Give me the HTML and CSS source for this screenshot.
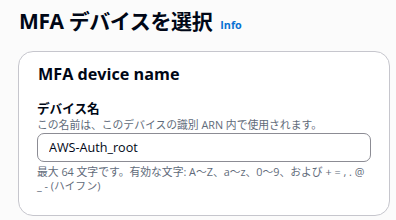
FILE: index.html
```html
<!DOCTYPE html>
<html>
	<head>
		<meta charset="UTF-8">
		<title>MFA デバイスを選択</title>
		<link rel="stylesheet" href="styles.css">
	</head>
	<body>
		<div class="page">
			<h1 class="page-title">MFA デバイスを選択<a href="#" class="info-link">Info</a></h1>
			<div class="card">
				<h2 class="card-title">MFA device name</h2>
				<div class="field">
					<label class="field-label" for="device">デバイス名</label>
					<p class="field-desc">この名前は、このデバイスの識別 ARN 内で使用されます。</p>
					<input class="field-input" id="device" type="text" value="AWS-Auth_root">
					<p class="field-hint">最大 64 文字です。有効な文字: A～Z、a～z、0～9、および + = , . @ _ - (ハイフン)</p>
				</div>
			</div>
		</div>
	</body>
</html>
```
FILE: styles.css
```css
* { margin:0; padding:0; box-sizing:border-box; }
body { background:#fbfbfb; font-family:"Open Sans", "Noto Sans CJK JP", sans-serif; color:#000716; }
.page { padding:8px 6px 0 18px; }
.page-title { font-size:21px; font-weight:700; line-height:27px; letter-spacing:-0.4px; padding-left:1px; }
.info-link { font-size:10.8px; font-weight:700; color:#0972d3; text-decoration:none; margin-left:8px; letter-spacing:0; }
.card { margin-top:13px; background:#fff; border:1px solid #c6c6cd; border-radius:15px; padding:13px 18px 21px 18px; }
.card-title { font-size:16.2px; font-weight:700; line-height:19.8px; padding-left:1px; }
.field { margin-top:15px; }
.field-label { display:block; font-size:12.6px; font-weight:700; line-height:18px; }
.field-desc { font-size:10.8px; line-height:14.4px; color:#5f6b7a; }
.field-input { display:block; width:100%; height:28.8px; margin-top:1px; border:1px solid #8c8c94; border-radius:7px; padding:0 11px; font-family:inherit; font-size:12.6px; color:#000716; background:#fff; }
.field-hint { margin-top:3px; font-size:10.8px; line-height:14.4px; color:#5f6b7a; }
```
